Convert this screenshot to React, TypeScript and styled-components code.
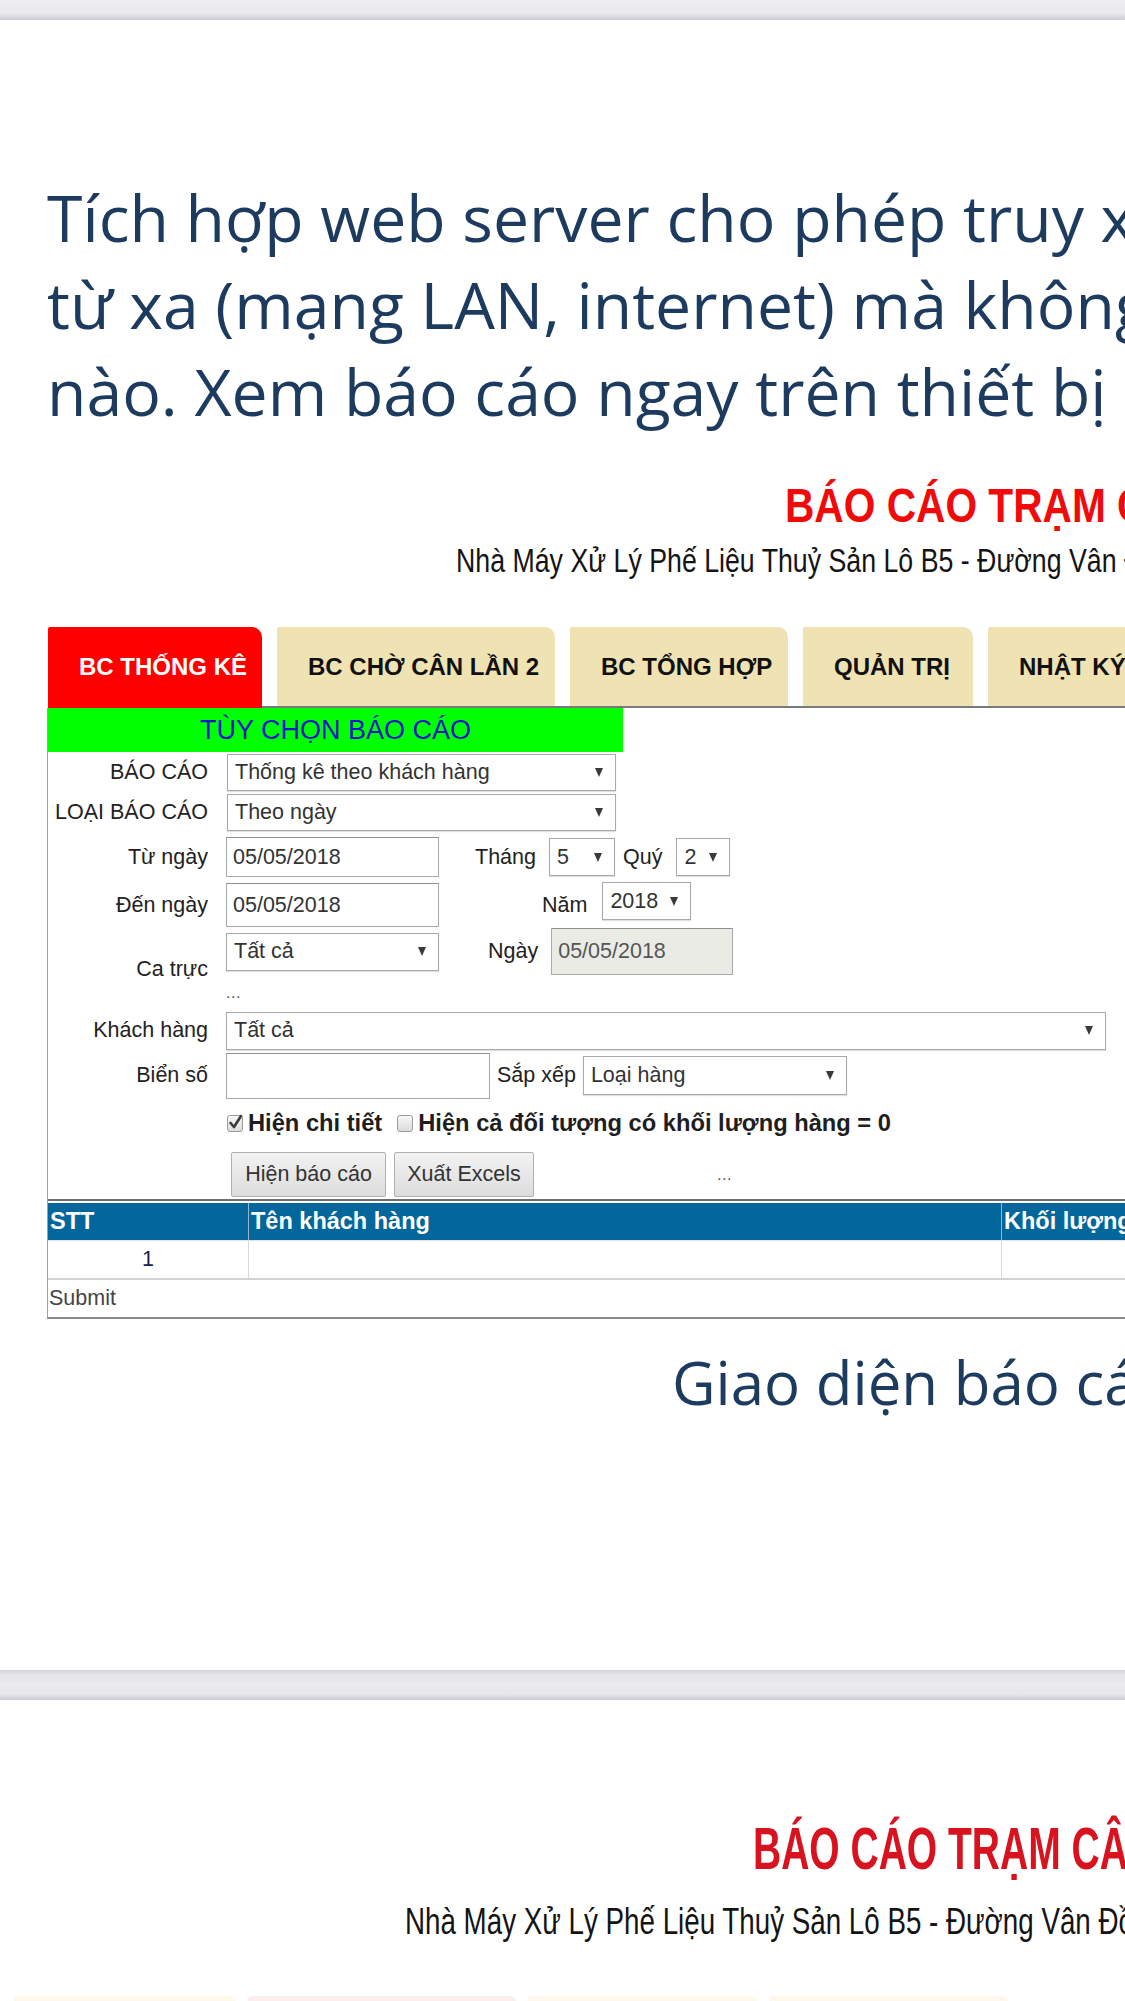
import React from "react";
import styled, { createGlobalStyle } from "styled-components";

const GlobalStyle = createGlobalStyle`
  html, body { margin: 0; padding: 0; background: #ffffff; overflow: hidden; }
  body { font-family: "Liberation Sans", Arial, sans-serif; }
  #root { width: 1125px; height: 2001px; overflow: hidden; }
  * { box-sizing: border-box; }
`;

const Page = styled.div`
  width: 1125px;
  height: 2001px;
  overflow: hidden;
  display: flex;
  flex-direction: column;
  background: #ffffff;
`;

const Band = styled.div<{ $h: number; $both?: boolean }>`
  flex: none;
  height: ${(p) => p.$h}px;
  background: ${(p) =>
    p.$both
      ? "linear-gradient(to bottom, #d3d3d7 0%, #e4e4e8 14%, #ececf0 50%, #e6e6ea 82%, #cdcdd1 100%)"
      : "linear-gradient(to bottom, #eeeef2 0%, #eaeaee 68%, #d9d9dd 84%, #cfcfd3 100%)"};
`;

const Slide = styled.section<{ $h?: number }>`
  flex: ${(p) => (p.$h ? "none" : "1")};
  height: ${(p) => (p.$h ? `${p.$h}px` : "auto")};
  display: flex;
  flex-direction: column;
  overflow: hidden;
  background: #ffffff;
`;

const Heading = styled.h1`
  margin: 154px 0 0;
  padding-left: 47px;
  font-family: "Open Sans", sans-serif;
  font-weight: 400;
  font-size: 64.3px;
  line-height: 87px;
  color: #1d3b5e;
  white-space: nowrap;
`;

const HeadLine = styled.span`
  display: block;
`;

const Caption = styled.p`
  margin: 28px 0 0;
  padding-left: 672px;
  font-family: "Open Sans", sans-serif;
  font-size: 60px;
  line-height: 71px;
  color: #1d3b5e;
  white-space: nowrap;
`;

const ReportTitle = styled.div<{ $size: number; $left: number; $top: number; $color: string }>`
  margin-top: ${(p) => p.$top}px;
  padding-left: ${(p) => p.$left}px;
  font-family: "Liberation Sans", sans-serif;
  font-weight: 700;
  font-size: ${(p) => p.$size}px;
  line-height: ${(p) => p.$size}px;
  color: ${(p) => p.$color};
  white-space: nowrap;
`;

const ReportSub = styled.div<{ $size: number; $left: number; $top: number }>`
  margin-top: ${(p) => p.$top}px;
  padding-left: ${(p) => p.$left}px;
  font-family: "Liberation Sans", sans-serif;
  font-weight: 400;
  font-size: ${(p) => p.$size}px;
  line-height: ${(p) => p.$size}px;
  color: #141414;
  white-space: nowrap;
`;

const Squash = styled.span<{ $sx: number }>`
  display: inline-block;
  transform: scaleX(${(p) => p.$sx});
  transform-origin: 0 50%;
`;

const TabBar = styled.div`
  margin: 50px 0 0 48px;
  width: 1200px;
  height: 81px;
  display: flex;
  align-items: flex-start;
  gap: 15px;
  border-bottom: 2px solid #7a7a7a;
`;

const Tab = styled.div<{ $w: number; $active?: boolean }>`
  flex: none;
  position: relative;
  z-index: ${(p) => (p.$active ? 1 : 0)};
  width: ${(p) => p.$w}px;
  height: ${(p) => (p.$active ? 81 : 79)}px;
  padding: 0 0 ${(p) => (p.$active ? 2 : 0)}px 31px;
  display: flex;
  align-items: center;
  border-radius: 2px 10px 0 0;
  background: ${(p) => (p.$active ? "#ff0000" : "#efe2b3")};
  color: ${(p) => (p.$active ? "#ffffff" : "#111111")};
  font-family: "Liberation Sans", sans-serif;
  font-weight: 700;
  font-size: 24px;
  white-space: nowrap;
`;

const Panel = styled.div`
  margin-left: 47px;
  width: 1200px;
  border-left: 1px solid #a0a0a0;
  border-bottom: 2px solid #8a8a8a;
  font-family: "Liberation Sans", sans-serif;
  font-size: 21.5px;
  color: #222222;
`;

const GreenBar = styled.div`
  width: 575px;
  height: 44px;
  background: #00ff00;
  color: #1414cc;
  font-size: 27px;
  line-height: 44px;
  text-align: center;
  white-space: nowrap;
`;

const Row = styled.div<{ $h: number; $top?: boolean; $pt?: number }>`
  display: flex;
  align-items: ${(p) => (p.$top ? "flex-start" : "center")};
  height: ${(p) => p.$h}px;
  padding-top: ${(p) => p.$pt ?? 0}px;
  white-space: nowrap;
`;

const Label = styled.div`
  flex: none;
  align-self: center;
  width: 160px;
  margin-right: 18px;
  text-align: right;
  color: #222222;
`;

const Stack = styled.div`
  display: flex;
  flex-direction: column;
`;

const Line = styled.div`
  display: flex;
  align-items: center;
  height: 47px;
`;

const SubLabel = styled.span<{ $ml: number }>`
  flex: none;
  margin-left: ${(p) => p.$ml}px;
  color: #222222;
`;

const SelectBox = styled.div<{ $w: number; $ml?: number; $h?: number; $self?: string }>`
  flex: none;
  align-self: ${(p) => p.$self ?? "auto"};
  width: ${(p) => p.$w}px;
  height: ${(p) => p.$h ?? 38}px;
  margin-left: ${(p) => p.$ml ?? 0}px;
  padding: 0 12px 0 7px;
  display: flex;
  align-items: center;
  justify-content: space-between;
  background: #ffffff;
  border: 1px solid #a9a9a9;
  box-shadow: 0 1px 1px rgba(0, 0, 0, 0.12);
  color: #333333;
`;

const Caret = styled.span`
  flex: none;
  width: 0;
  height: 0;
  border-left: 4.5px solid transparent;
  border-right: 4.5px solid transparent;
  border-top: 9px solid #3a3a3a;
`;

const TextBox = styled.div<{ $w: number; $h: number; $ml?: number; $disabled?: boolean }>`
  flex: none;
  width: ${(p) => p.$w}px;
  height: ${(p) => p.$h}px;
  margin-left: ${(p) => p.$ml ?? 0}px;
  padding-left: 6px;
  display: flex;
  align-items: center;
  background: ${(p) => (p.$disabled ? "#ebebe6" : "#ffffff")};
  border: 1px solid #a9a9a9;
  border-top-color: #8f8f8f;
  color: ${(p) => (p.$disabled ? "#555555" : "#333333")};
`;

const Dots = styled.span<{ $ml: number; $lh: number }>`
  margin-left: ${(p) => p.$ml}px;
  line-height: ${(p) => p.$lh}px;
  color: #555555;
  font-size: 16px;
  letter-spacing: 0.5px;
`;

const CheckGroup = styled.label`
  display: flex;
  align-items: center;
  margin-left: 1px;
  font-weight: 700;
  font-size: 23.7px;
  color: #1e1e1e;
`;

const CheckBox = styled.span<{ $ml?: number }>`
  flex: none;
  position: relative;
  width: 16px;
  height: 17px;
  margin: 0 5px 0 ${(p) => p.$ml ?? 0}px;
  border: 1px solid #9c9c9c;
  border-radius: 3px;
  background: linear-gradient(to bottom, #f6f6f6, #dcdcdc);
`;

const CheckMark = styled.svg`
  position: absolute;
  left: 0px;
  top: -3px;
`;

const Button = styled.div<{ $w: number; $ml: number }>`
  flex: none;
  width: ${(p) => p.$w}px;
  height: 45px;
  margin-left: ${(p) => p.$ml}px;
  display: flex;
  align-items: center;
  justify-content: center;
  background: linear-gradient(to bottom, #f2f2f2, #dddddd);
  border: 1px solid #b0b0b0;
  border-radius: 2px;
  color: #333333;
`;

const Table = styled.div`
  width: 1200px;
  border-top: 2px solid #6e6e6e;
  padding-top: 2px;
`;

const HeadRow = styled.div`
  display: flex;
  height: 37px;
  background: #03679c;
  color: #ffffff;
  font-weight: 700;
  font-size: 23.5px;
`;

const BodyRow = styled.div`
  display: flex;
  height: 40px;
  border-top: 1px solid #e2e2e2;
  border-bottom: 2px solid #d2d2d2;
  color: #1c1c55;
`;

const Cell = styled.div<{ $w: number; $center?: boolean; $line: string }>`
  flex: none;
  width: ${(p) => p.$w}px;
  padding-left: ${(p) => (p.$center ? 0 : 2)}px;
  display: flex;
  align-items: center;
  justify-content: ${(p) => (p.$center ? "center" : "flex-start")};
  border-right: 1px solid ${(p) => p.$line};
  white-space: nowrap;
`;

const SubmitRow = styled.div`
  height: 37px;
  display: flex;
  align-items: center;
  padding-left: 1px;
  color: #444444;
`;

const FaintTabs = styled.div`
  margin-top: 56px;
  display: flex;
  gap: 11px;
  padding-left: 14px;
`;

const FaintTab = styled.div<{ $w: number; $c: string }>`
  flex: none;
  width: ${(p) => p.$w}px;
  height: 12px;
  border-radius: 4px 8px 0 0;
  background: ${(p) => p.$c};
`;

const Check = () => (
  <CheckMark width="16" height="18" viewBox="0 0 16 18">
    <path d="M2.5 10 L6 14 L13 3" stroke="#3a3a3a" strokeWidth="2.6" fill="none" strokeLinecap="round" strokeLinejoin="round" />
  </CheckMark>
);

const Sel = ({ w, text, ml, h, self }: { w: number; text: string; ml?: number; h?: number; self?: string }) => (
  <SelectBox $w={w} $ml={ml} $h={h} $self={self}>
    <span>{text}</span>
    <Caret />
  </SelectBox>
);

export default function App() {
  return (
    <>
      <GlobalStyle />
      <Page>
        <Band $h={20} />
        <Slide $h={1650}>
          <Heading>
            <HeadLine>Tích hợp web server cho phép truy xuất</HeadLine>
            <HeadLine>từ xa (mạng LAN, internet) mà không</HeadLine>
            <HeadLine>nào. Xem báo cáo ngay trên thiết bị di</HeadLine>
          </Heading>

          <ReportTitle $size={49} $left={785} $top={46} $color="#f00a0a">
            <Squash $sx={0.83}>BÁO CÁO TRẠM CÂN</Squash>
          </ReportTitle>
          <ReportSub $size={33} $left={456} $top={14}>
            <Squash $sx={0.81}>Nhà Máy Xử Lý Phế Liệu Thuỷ Sản Lô B5 - Đường Vân Đồn</Squash>
          </ReportSub>

          <TabBar>
            <Tab $w={214} $active>BC THỐNG KÊ</Tab>
            <Tab $w={278}>BC CHỜ CÂN LẦN 2</Tab>
            <Tab $w={218}>BC TỔNG HỢP</Tab>
            <Tab $w={170}>QUẢN TRỊ</Tab>
            <Tab $w={200}>NHẬT KÝ</Tab>
          </TabBar>

          <Panel>
            <GreenBar>TÙY CHỌN BÁO CÁO</GreenBar>

            <Row $h={40}>
              <Label>BÁO CÁO</Label>
              <Sel w={389} ml={1} text="Thống kê theo khách hàng" h={37} />
            </Row>
            <Row $h={40}>
              <Label>LOẠI BÁO CÁO</Label>
              <Sel w={389} ml={1} text="Theo ngày" h={37} />
            </Row>
            <Row $h={50}>
              <Label>Từ ngày</Label>
              <TextBox $w={213} $h={40}>05/05/2018</TextBox>
              <SubLabel $ml={36}>Tháng</SubLabel>
              <Sel w={66} ml={13} text="5" />
              <SubLabel $ml={8}>Quý</SubLabel>
              <Sel w={54} ml={14} text="2" />
            </Row>
            <Row $h={46}>
              <Label>Đến ngày</Label>
              <TextBox $w={213} $h={44}>05/05/2018</TextBox>
              <SubLabel $ml={103}>Năm</SubLabel>
              <Sel w={89} ml={15} text="2018" self="flex-start" />
            </Row>
            <Row $h={82} $top>
              <Label>Ca trực</Label>
              <Stack>
                <Line>
                  <Sel w={213} text="Tất cả" />
                  <SubLabel $ml={49}>Ngày</SubLabel>
                  <TextBox $w={182} $h={47} $ml={13} $disabled>
                    05/05/2018
                  </TextBox>
                </Line>
                <Dots $ml={0} $lh={35}>...</Dots>
              </Stack>
            </Row>
            <Row $h={41}>
              <Label>Khách hàng</Label>
              <Sel w={880} text="Tất cả" />
            </Row>
            <Row $h={49}>
              <Label>Biển số</Label>
              <TextBox $w={264} $h={46} />
              <SubLabel $ml={7}>Sắp xếp</SubLabel>
              <Sel w={264} ml={7} h={39} text="Loại hàng" />
            </Row>
            <Row $h={46}>
              <Label />
              <CheckGroup>
                <CheckBox>
                  <Check />
                </CheckBox>
                Hiện chi tiết
                <CheckBox $ml={15} />
                Hiện cả đối tượng có khối lượng hàng = 0
              </CheckGroup>
            </Row>
            <Row $h={53} $top $pt={6}>
              <Label />
              <Button $w={155} $ml={5}>Hiện báo cáo</Button>
              <Button $w={140} $ml={8}>Xuất Excels</Button>
              <Dots $ml={183} $lh={45}>...</Dots>
            </Row>

            <Table>
              <HeadRow>
                <Cell $w={201} $line="#8fb5cf">STT</Cell>
                <Cell $w={753} $line="#8fb5cf">Tên khách hàng</Cell>
                <Cell $w={240} $line="#8fb5cf">Khối lượng</Cell>
              </HeadRow>
              <BodyRow>
                <Cell $w={201} $center $line="#d8d8d8">1</Cell>
                <Cell $w={753} $line="#d8d8d8" />
                <Cell $w={240} $line="#d8d8d8" />
              </BodyRow>
              <SubmitRow>Submit</SubmitRow>
            </Table>
          </Panel>

          <Caption>Giao diện báo cáo</Caption>
        </Slide>

        <Band $h={30} $both />

        <Slide>
          <ReportTitle $size={60} $left={753} $top={119} $color="#d8121e">
            <Squash $sx={0.65}>BÁO CÁO TRẠM CÂN</Squash>
          </ReportTitle>
          <ReportSub $size={37} $left={405} $top={24}>
            <Squash $sx={0.75}>Nhà Máy Xử Lý Phế Liệu Thuỷ Sản Lô B5 - Đường Vân Đồn</Squash>
          </ReportSub>
          <FaintTabs>
            <FaintTab $w={223} $c="#fdf8ea" />
            <FaintTab $w={269} $c="#fdeeee" />
            <FaintTab $w={230} $c="#fdf8ea" />
            <FaintTab $w={240} $c="#fdf8ea" />
          </FaintTabs>
        </Slide>
      </Page>
    </>
  );
}
